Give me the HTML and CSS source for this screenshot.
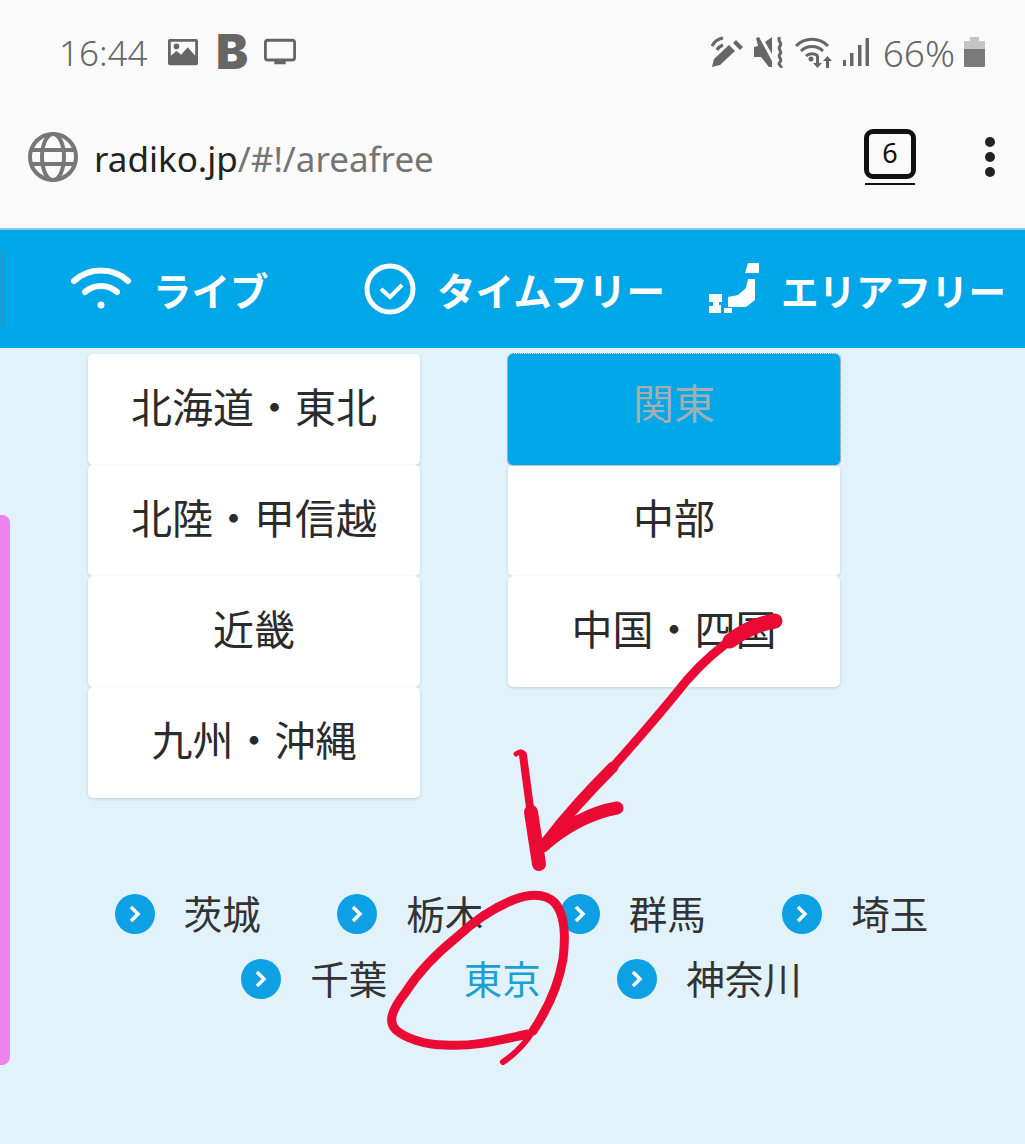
FILE: index.html
```html
<!DOCTYPE html>
<html lang="ja">
<head>
  <meta charset="UTF-8">
  <meta name="viewport" content="width=device-width, initial-scale=1.0">
  <title>radiko エリアフリー</title>
  <link rel="stylesheet" href="styles.css">
</head>
<body>
  <div class="status-bar">
    <div class="status-left">
      <span class="status-time">16:44</span>
      <svg class="icon-picture" width="30" height="30" viewBox="0 0 32 30">
        <path fill="#666" fill-rule="evenodd" d="M2 1h28a2 2 0 0 1 2 2v24a2 2 0 0 1-2 2H2a2 2 0 0 1-2-2V3a2 2 0 0 1 2-2zm1 3v15l6-5 5 4 7-8 8 9V4z"/>
        <circle cx="9" cy="9" r="3" fill="#666"/>
      </svg>
      <span class="status-b">B</span>
      <svg class="icon-tv" width="32" height="28" viewBox="0 0 34 28">
        <rect x="1.5" y="1.5" width="31" height="21" rx="2.5" fill="none" stroke="#666" stroke-width="3"/>
        <rect x="11" y="23" width="12" height="4" fill="#666"/>
      </svg>
    </div>
    <div class="status-right">
      <svg width="32" height="32" viewBox="0 0 32 32">
        <path fill="#666" d="M1 31l2-8L18 9l6 6L9 29z"/>
        <path fill="#666" d="M22 7l3-3 7 7-3 3z"/>
        <path fill="none" stroke="#666" stroke-width="3" d="M1 10c2-4 6-7 11-8M6 14c1-2 3-4 6-5"/>
      </svg>
      <svg width="30" height="31" viewBox="0 0 30 31">
        <path fill="#666" d="M2 1l3-1 13 24v6h-3l-8-10H0V10l4-1z"/>
        <path fill="#666" d="M11 5l7-5v17z"/>
        <path fill="none" stroke="#666" stroke-width="3" d="M26 0c-4 4 3 5 0 9s3 5 0 8 3 5 0 8 2 3 1 6"/>
      </svg>
      <svg class="icon-wifi" width="40" height="31" viewBox="0 0 40 31">
        <path fill="none" stroke="#666" stroke-width="3" d="M1 9c9-9 23-9 32 0M6 14c6-6 16-6 22 0M11 19c3-3 9-3 12 0"/>
        <circle cx="16" cy="22" r="2.500" fill="#666"/>
        <path fill="#666" d="M21 19h3v7h3l-4.500 5-4.500-5h3zM31 31h3v-7h3l-4.500-5-4.500 5h3z"/>
      </svg>
      <svg class="icon-signal" width="26" height="30" viewBox="0 0 26 30">
        <rect x="0" y="23" width="3" height="6" fill="#666"/>
        <rect x="7" y="16" width="3.500" height="13" fill="#666"/>
        <rect x="15" y="8" width="3.500" height="21" fill="#666"/>
        <rect x="22.500" y="1" width="3.500" height="28" fill="#666"/>
      </svg>
      <span class="status-battery">66%</span>
      <svg width="21" height="32" viewBox="0 0 21 32">
        <path fill="#c4c4c4" d="M6 1h9v4h5a1 1 0 0 1 1 1v10H0V6a1 1 0 0 1 1-1h5z"/>
        <path fill="#7a7a7a" d="M0 13h21v17a1 1 0 0 1-1 1H1a1 1 0 0 1-1-1z"/>
      </svg>
    </div>
  </div>

  <div class="url-bar">
    <svg class="icon-globe" width="52" height="52" viewBox="0 0 52 52" fill="none" stroke="#777" stroke-width="4">
      <circle cx="26" cy="26" r="23"/>
      <ellipse cx="26" cy="26" rx="11" ry="23"/>
      <path d="M3 19h46M3 33h46"/>
    </svg>
    <div class="url-text"><span class="url-host">radiko.jp</span>/#!/areafree</div>
    <div class="tab-count">
      <div class="tab-box">6</div>
      <div class="tab-line"></div>
    </div>
    <div class="menu-dots"><i></i><i></i><i></i></div>
  </div>

  <nav class="nav">
    <div class="nav-edge"></div>
    <a class="nav-item nav-live">
      <svg width="62" height="46" viewBox="0 0 62 46" fill="none" stroke="#fff" stroke-width="6" stroke-linecap="round">
        <path d="M4 15c15-14 39-14 54 0"/>
        <path d="M15 26c9-8 23-8 32 0"/>
        <circle cx="31" cy="39" r="3.500" fill="#fff" stroke="none"/>
      </svg>
      <span>ライブ</span>
    </a>
    <a class="nav-item nav-time">
      <svg width="52" height="52" viewBox="0 0 52 52" fill="none" stroke="#fff" stroke-width="5">
        <circle cx="26" cy="26" r="23"/>
        <path d="M17 26l9 8 12-12" stroke-width="4"/>
      </svg>
      <span>タイムフリー</span>
    </a>
    <a class="nav-item nav-area">
      <svg width="51" height="52" viewBox="0 0 51 52" fill="#fff">
        <path d="M40 0h11v10H37z"/>
        <path d="M40 16h7v21l-9 7H20V34l10-2 8-7z"/>
        <path d="M1 31h13v8h-3v3h2v8H1v-7h4v-4H1z"/>
        <path d="M16 45h8v5h-8z"/>
      </svg>
      <span>エリアフリー</span>
    </a>
  </nav>

  <main class="main">
    <div class="side-tab"></div>

    <div class="region-grid">
      <div class="region-col">
        <div class="region-btn">北海道・東北</div>
        <div class="region-btn">北陸・甲信越</div>
        <div class="region-btn">近畿</div>
        <div class="region-btn">九州・沖縄</div>
      </div>
      <div class="region-col">
        <div class="region-btn is-active">関東</div>
        <div class="region-btn">中部</div>
        <div class="region-btn">中国・四国</div>
      </div>
    </div>

    <div class="pref-list">
      <div class="pref-row">
        <a class="pref"><i class="pref-arrow"><svg width="14" height="18" viewBox="0 0 14 18"><path d="M3 2l7 7-7 7" fill="none" stroke="#fff" stroke-width="3.500"/></svg></i>茨城</a>
        <a class="pref"><i class="pref-arrow"><svg width="14" height="18" viewBox="0 0 14 18"><path d="M3 2l7 7-7 7" fill="none" stroke="#fff" stroke-width="3.500"/></svg></i>栃木</a>
        <a class="pref"><i class="pref-arrow"><svg width="14" height="18" viewBox="0 0 14 18"><path d="M3 2l7 7-7 7" fill="none" stroke="#fff" stroke-width="3.500"/></svg></i>群馬</a>
        <a class="pref"><i class="pref-arrow"><svg width="14" height="18" viewBox="0 0 14 18"><path d="M3 2l7 7-7 7" fill="none" stroke="#fff" stroke-width="3.500"/></svg></i>埼玉</a>
      </div>
      <div class="pref-row">
        <a class="pref"><i class="pref-arrow"><svg width="14" height="18" viewBox="0 0 14 18"><path d="M3 2l7 7-7 7" fill="none" stroke="#fff" stroke-width="3.500"/></svg></i>千葉</a>
        <a class="pref is-current">東京</a>
        <a class="pref"><i class="pref-arrow"><svg width="14" height="18" viewBox="0 0 14 18"><path d="M3 2l7 7-7 7" fill="none" stroke="#fff" stroke-width="3.500"/></svg></i>神奈川</a>
      </div>
    </div>
  </main>

  <!-- hand drawn red marks on top of the screenshot -->
  <svg class="scribble" width="1025" height="1144" viewBox="0 0 1025 1144" fill="none" stroke="#ea0a33" stroke-linecap="round" stroke-linejoin="round">
    <path stroke-width="15" d="M775 621c-14 2-30 9-45 20"/>
    <path stroke-width="9" d="M738 635c-18 12-36 28-51 45-24 30-50 60-74 87"/>
    <path stroke-width="11" d="M613 767c-22 22-46 48-66 74"/>
    <path stroke-width="5" d="M516 754c4-3 7-3 8 1"/>
    <path stroke-width="8" d="M523 755l8 60"/>
    <path stroke-width="14" d="M531 812l8 52"/>
    <path stroke-width="13" d="M617 808c-24 4-52 18-74 38"/>
    <path stroke-width="6" d="M503 1062C515 1054 525 1044 533 1031"/>
    <path stroke-width="9" d="M533 1031C549 1007 559 983 563 959C566 935 565 915 555 903C545 893 529 894 513 900C491 909 473 922 457 937C437 953 419 971 405 993C391 1011 388 1022 396 1030C405 1038 425 1045 445 1045C475 1047 500 1040 528 1034"/>
  </svg>
</body>
</html>
```

FILE: styles.css
```css
* {
  box-sizing: border-box;
}
html, body {
  margin: 0;
  height: 1144px;
  overflow: hidden;
}
body {
  position: relative;
  display: flex;
  flex-direction: column;
  font-family: "Noto Sans CJK JP", "Noto Sans", sans-serif;
  background: #fafafa;
}

/* status bar */
.status-bar {
  height: 104px;
  display: flex;
  justify-content: space-between;
  align-items: center;
  padding: 0 40px 0 59px;
  color: #666;
}
.status-left, .status-right {
  display: flex;
  align-items: center;
}
.status-time {
  font-family: "Noto Sans", sans-serif;
  font-size: 35px;
  font-weight: 300;
  width: 109px;
}
.icon-picture {
  margin-right: 18px;
}
.status-b {
  font-family: Inter, sans-serif;
  font-weight: 900;
  font-size: 48px;
  line-height: 40px;
  width: 48px;
}
.status-right svg {
  margin-right: 11px;
  flex: none;
}
.status-right svg:last-child {
  margin-right: 0;
}
.status-right .icon-wifi {
  margin-right: 8px;
}
.status-right .icon-signal {
  margin-right: 14px;
}
.status-battery {
  font-family: "Noto Sans", sans-serif;
  font-size: 37px;
  font-weight: 300;
  margin-right: 9px;
  white-space: nowrap;
}

/* url bar */
.url-bar {
  height: 124px;
  display: flex;
  align-items: center;
  padding: 0 30px 19px 27px;
}
.icon-globe {
  margin-right: 15px;
}
.url-text {
  font-family: "Noto Sans", sans-serif;
  font-size: 35px;
  color: #747474;
  flex: 1;
  padding-top: 3px;
}
.url-host {
  color: #222;
}
.tab-count {
  width: 52px;
  margin-right: 69px;
  padding-top: 1px;
}
.tab-box {
  height: 50px;
  border: 5px solid #111;
  border-radius: 9px;
  font-family: "Noto Sans", sans-serif;
  font-size: 27px;
  line-height: 38px;
  text-align: center;
  color: #111;
}
.tab-line {
  height: 2px;
  margin: 4px 1px 0;
  background: #111;
}
.menu-dots {
  display: flex;
  flex-direction: column;
  gap: 5px;
}
.menu-dots i {
  width: 10px;
  height: 10px;
  border-radius: 50%;
  background: #222;
}

/* nav */
.nav {
  height: 120px;
  display: flex;
  align-items: center;
  background: #00a7e8;
  border-top: 2px solid #7fd2f0;
  color: #fff;
  font-size: 38.500px;
  font-weight: 700;
  white-space: nowrap;
}
.nav-edge {
  width: 1px;
  height: 80px;
  margin-left: 2px;
  background: #2f8fc0;
}
.nav-item {
  display: flex;
  align-items: center;
}
.nav-live {
  margin-left: 67px;
  gap: 21px;
  width: 294px;
}
.nav-time {
  gap: 21px;
  width: 344px;
}
.nav-area {
  gap: 22px;
  font-size: 37.500px;
}

/* main */
.main {
  position: relative;
  flex: 1;
  background: #e1f2fb;
  padding-top: 6px;
}
.side-tab {
  position: absolute;
  left: 0;
  top: 167px;
  width: 10px;
  height: 550px;
  border-radius: 0 8px 8px 0;
  background: #ee82ee;
}
.region-grid {
  display: flex;
  gap: 88px;
  margin-left: 88px;
  height: 444px;
}
.region-col {
  width: 332px;
}
.region-btn {
  height: 111px;
  display: flex;
  align-items: center;
  justify-content: center;
  padding-bottom: 10px;
  background: #fff;
  border-radius: 5px;
  box-shadow: 0 1px 3px rgba(0, 0, 0, 0.15);
  font-size: 41px;
  color: #2b2b2b;
}
.region-btn.is-active {
  background: #00a7e8;
  color: #a3aeb3;
  outline: 1px dotted #5c8aa0;
  padding-bottom: 18px;
}
.pref-list {
  margin-top: 91px;
  padding-left: 18px;
  display: flex;
  flex-direction: column;
  gap: 15px;
}
.pref-row {
  display: flex;
  justify-content: center;
  gap: 76.500px;
  height: 50px;
}
.pref {
  display: flex;
  align-items: center;
  padding-bottom: 4px;
  font-size: 38.500px;
  color: #333;
}
.pref.is-current {
  color: #1c9fd4;
}
.pref-arrow {
  width: 40px;
  height: 40px;
  margin: 4px 29px 0 0;
  border-radius: 50%;
  background: #0ea0e4;
  display: flex;
  align-items: center;
  justify-content: center;
}

/* annotation */
.scribble {
  position: absolute;
  left: 0;
  top: 0;
  pointer-events: none;
}
```
